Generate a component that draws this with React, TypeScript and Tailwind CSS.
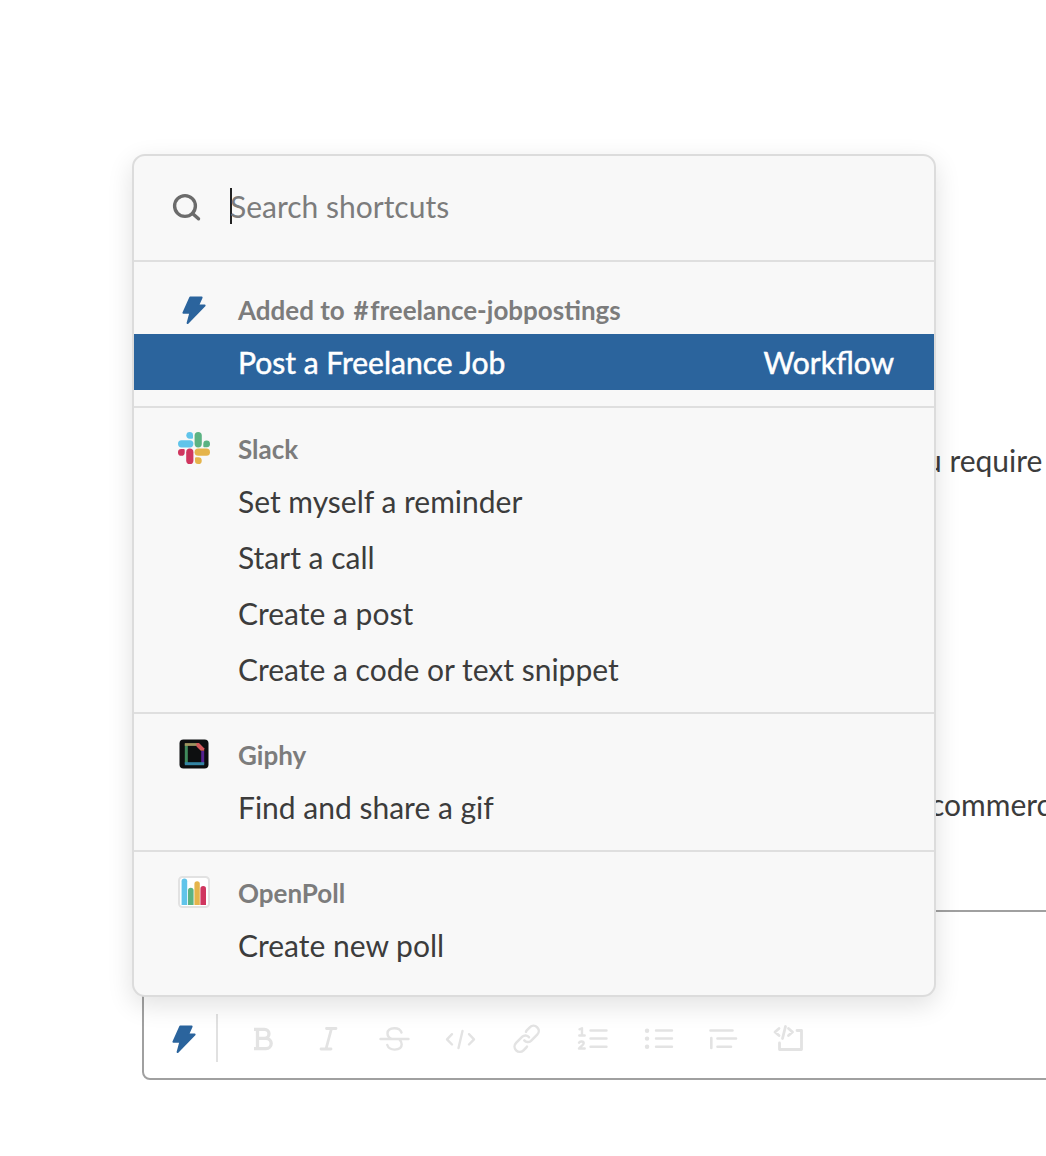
import React from "react";

type Item = { label: string };

function Bolt() {
  return (
    <svg width="32" height="32" viewBox="0 0 32 32" fill="#2b649d" stroke="#2b649d" strokeWidth="2" strokeLinejoin="round">
      <path d="M12.200 3.600H23.600l-3.600 8h6.600L9.600 29l2.800-10.200H5.400z" />
    </svg>
  );
}

function SlackLogo() {
  return (
    <svg width="32" height="32" viewBox="0 0 32 32">
      <path d="M11.700 0a3.300 3.300 0 1 0 0 6.700H14Q15 6.700 15 5.700V3.300A3.300 3.300 0 0 0 11.700 0z" fill="#60c4ea" />
      <rect x="0" y="8.200" width="15.400" height="7.200" rx="3.600" fill="#60c4ea" />
      <rect x="16.600" y="0" width="7.200" height="15.400" rx="3.600" fill="#5bb383" />
      <path d="M32 11.900a3.300 3.300 0 1 0-6.700 0v2.400q0 1 1 1h2.400a3.300 3.300 0 0 0 3.300-3.400z" fill="#5bb383" />
      <rect x="16.600" y="16.600" width="15.400" height="7.200" rx="3.600" fill="#e5b44b" />
      <path d="M20.400 32a3.300 3.300 0 1 0 0-6.700H18q-1 0-1 1v2.400a3.300 3.300 0 0 0 3.400 3.300z" fill="#e5b44b" />
      <rect x="8.200" y="16.600" width="7.200" height="15.400" rx="3.600" fill="#d0365f" />
      <path d="M0 20.400a3.300 3.300 0 1 0 6.700 0V18q0-1-1-1H3.300A3.300 3.300 0 0 0 0 20.400z" fill="#d0365f" />
    </svg>
  );
}

function GiphyLogo() {
  return (
    <svg width="32" height="32" viewBox="0 0 32 32">
      <rect x="1.500" y="1.500" width="29" height="29" rx="4" fill="#0d0f10" />
      <path d="M8.300 6v20" stroke="#408a5c" strokeWidth="3" />
      <path d="M6.800 6.500h13" stroke="#a09560" strokeWidth="2.800" />
      <path d="M24.700 13v13" stroke="#562190" strokeWidth="3" />
      <path d="M6.800 25.700h19.400" stroke="#3486a5" strokeWidth="3" />
      <path d="M18.500 5h2.500l5.200 5.200v2.600h-3.400l-4.300-4.300z" fill="#d2585a" />
    </svg>
  );
}

function PollLogo() {
  return (
    <svg width="32" height="32" viewBox="0 0 32 32">
      <rect x="1" y="1" width="30" height="30" rx="3.500" fill="#fff" stroke="#e2e2e2" strokeWidth="2" />
      <path d="M3.600 29V5.300a2.800 2.800 0 0 1 5.600 0V29z" fill="#60c4ea" />
      <path d="M10 29V14.600a2.800 2.800 0 0 1 5.600 0V29z" fill="#5bb383" />
      <path d="M16.400 29V8a2.700 2.700 0 0 1 5.400 0v21z" fill="#e5b44b" />
      <path d="M22.400 29V12.700a2.800 2.800 0 0 1 5.600 0V29z" fill="#d0365f" />
    </svg>
  );
}

function SectionHeader({ icon, children }: { icon: React.ReactNode; children: React.ReactNode }) {
  return (
    <div className="flex h-12 items-center pl-[44px] text-[#7c7c7c]">
      <span className="mr-[28px] flex w-8">{icon}</span>
      <span className="text-[26px] leading-8 font-bold whitespace-nowrap">{children}</span>
    </div>
  );
}

function Section({ icon, title, items }: { icon: React.ReactNode; title: string; items: Item[] }) {
  return (
    <section className="border-t-2 border-[#dfdfdf] pt-4 pb-4">
      <SectionHeader icon={icon}>
        <span className="relative top-px">{title}</span>
      </SectionHeader>
      {items.map((it) => (
        <div key={it.label} className="flex h-14 items-center pt-px pl-[104px] text-[30px] leading-9 text-[#3c3c3c]">
          <span className="whitespace-nowrap">{it.label}</span>
        </div>
      ))}
    </section>
  );
}

function ToolIcon({ children }: { children: React.ReactNode }) {
  return (
    <span className="flex w-[65.800px] shrink-0 justify-center">
      <svg width="36" height="36" viewBox="0 0 36 36" fill="none" stroke="#e3e3e3" strokeWidth="2.400" strokeLinecap="round" strokeLinejoin="round">
        {children}
      </svg>
    </span>
  );
}

function Composer() {
  return (
    <div className="ml-[142px] flex h-[170px] w-[1000px] items-end rounded-[8px] border-2 border-[#a0a0a0] bg-white pb-[16px]">
      <div className="flex h-[48px] items-center pl-[24px]">
        <span className="pt-0.5">
          <Bolt />
        </span>
        <span className="mr-[12.500px] ml-[16px] h-[48px] w-[2px] bg-[#e1e1e1]" />
        <div className="flex pt-0.5">
          <ToolIcon>
            <path d="M9 8.300h10.500a4.300 4.300 0 0 1 0 9H13M13 17.300h8a5 5 0 0 1 0 10.400H9M12.500 8.300v19.400" strokeWidth="3.300" strokeLinecap="butt" />
          </ToolIcon>
          <ToolIcon>
            <path d="M15.500 7.500H25M10 28h10M20.500 7.500l-5.500 20.500" strokeWidth="2.800" />
          </ToolIcon>
          <ToolIcon>
            <path d="M3.500 18h28M24.500 11.500c-1-3-3.500-4.300-7-4.300-4.300 0-7 2-7 5.300 0 2.700 1.700 4.300 4 5.300M10.300 24c1 3.200 3.600 4.600 7.400 4.600 4.200 0 7-2 7-5.300 0-2-.8-3.500-2.200-4.700" />
          </ToolIcon>
          <ToolIcon>
            <path d="M9 13.200 4 18.300l5 5.200M26 13.200l5 5.100-5 5.200M19.500 10l-4 17" />
          </ToolIcon>
          <ToolIcon>
            <path d="M15.300 19.400a4.600 4.600 0 0 0 6.700.5l6.200-6.200a5.200 5.200 0 0 0-7.400-7.400l-2.800 2.800a4.600 4.600 0 0 0-1 1.700M20 16.200a4.600 4.600 0 0 0-6.700-.5l-6.200 6.200a5.200 5.200 0 0 0 7.400 7.400l2.800-2.800a4.600 4.600 0 0 0 .7-1" strokeWidth="2.500" />
          </ToolIcon>
          <ToolIcon>
            <path d="M16.500 9.500h16M16.500 17.500h16M16.500 25.700h16M5.500 8.300l2.500-1v7M5.300 14.500h5.400M5 21.700c.8-1.700 4.700-1.700 4.700.5 0 1.800-2.500 2.800-4.700 5.300h5.700" />
          </ToolIcon>
          <ToolIcon>
            <path d="M16 9.500h16M16 17.500h16M16 25.700h16" />
            <path d="M7 9.700h.1M7 17.600h.1M7 25.800h.1" strokeWidth="4.400" />
          </ToolIcon>
          <ToolIcon>
            <path d="M4.500 9.500h22M11.500 17.500h18.500M11.500 25.700h13.500M5.300 17v10" strokeWidth="2.600" />
          </ToolIcon>
          <ToolIcon>
            <path d="M7 7.500 3 11l4 3.500M16.500 7.500 20.500 11l-4 3.500M13.500 5.500l-3 12M25 9.500h4.500V28.500H7.500V22" strokeWidth="2.800" />
          </ToolIcon>
        </div>
      </div>
    </div>
  );
}

function ShortcutsMenu() {
  return (
    <div className="absolute top-[154px] left-[132px] flex h-[843px] w-[804px] flex-col overflow-hidden rounded-[13px] border-2 border-[#dcdcdc] bg-[#f8f8f8] shadow-[0_8px_26px_rgba(0,0,0,0.12)]">
      <div className="flex h-[104px] shrink-0 items-center pl-[37px]">
        <svg width="32" height="32" viewBox="0 0 32 32" fill="none" stroke="#6b6b6b" strokeWidth="3.400">
          <circle cx="14" cy="14" r="10.400" />
          <path d="M21.500 21.500l6 5.300" strokeLinecap="round" />
        </svg>
        <span className="mb-1 ml-[27px] h-9 w-[2px] bg-[#222]" />
        <span className="mb-1 -ml-[2px] text-[30px] leading-9 whitespace-nowrap text-[#7c7c7c]">Search shortcuts</span>
      </div>
      <section className="border-t-2 border-[#dfdfdf] pt-6 pb-4">
        <SectionHeader icon={<Bolt />}>
          Added to <span className="mr-[1.500px] ml-[2.500px]">#</span>freelance-jobpostings
        </SectionHeader>
        <div className="flex h-14 items-center justify-between bg-[#2b649d] pr-[40px] pl-[104px] text-[30px] leading-9 text-white [-webkit-text-stroke:0.500px_white]">
          <span className="whitespace-nowrap">Post a Freelance Job</span>
          <span className="whitespace-nowrap">Workflow</span>
        </div>
      </section>
      <Section
        icon={<SlackLogo />}
        title="Slack"
        items={[
          { label: "Set myself a reminder" },
          { label: "Start a call" },
          { label: "Create a post" },
          { label: "Create a code or text snippet" },
        ]}
      />
      <Section icon={<GiphyLogo />} title="Giphy" items={[{ label: "Find and share a gif" }]} />
      <Section icon={<PollLogo />} title="OpenPoll" items={[{ label: "Create new poll" }]} />
    </div>
  );
}

export default function App() {
  return (
    <div className="relative h-[1156px] w-full overflow-hidden bg-white font-['Lato',sans-serif] text-[#3c3c3c]">
      <div className="flex h-[910px] flex-col items-start pt-[442px]">
        <p className="ml-[925px] h-9 text-[30px] leading-9 whitespace-nowrap">u require</p>
        <p className="mt-[308px] ml-[930px] h-9 text-[30px] leading-9 whitespace-nowrap">commerc</p>
      </div>
      <Composer />
      <ShortcutsMenu />
    </div>
  );
}
